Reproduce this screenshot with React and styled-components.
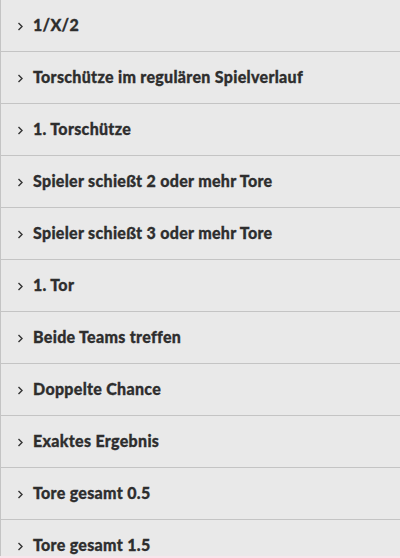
import styled, { createGlobalStyle } from 'styled-components';

const Global = createGlobalStyle`
body {
  margin: 0;
  background: #f7e6ec;
  font-family: Lato, "Noto Sans", sans-serif;
}
`;

const List = styled.div`
background: #e9e9e9;
border-left: 1px solid #c4c4c4;
height: 556px;
overflow: hidden;
`;

const Row = styled.div`
height: 52px;
border-bottom: 1px solid #c4c4c4;
display: flex;
align-items: center;
padding-left: 16px;
padding-bottom: 2px;
box-sizing: border-box;
gap: 9px;
`;

const Chevron = styled.svg`
width: 7px;
height: 9px;
flex-shrink: 0;
margin-top: 3px;
`;

const Label = styled.span`
font-size: 16px;
font-weight: 900;
letter-spacing: 0.3px;
color: #2e2e2e;
-webkit-text-stroke: 0.3px #2e2e2e;
`;

const items = [
  '1/X/2',
  'Torschütze im regulären Spielverlauf',
  '1. Torschütze',
  'Spieler schießt 2 oder mehr Tore',
  'Spieler schießt 3 oder mehr Tore',
  '1. Tor',
  'Beide Teams treffen',
  'Doppelte Chance',
  'Exaktes Ergebnis',
  'Tore gesamt 0.5',
  'Tore gesamt 1.5',
];

const App = () => {
  return (
    <>
      <Global />
      <List>
        {items.map((t) => (
          <Row key={t}>
            <Chevron viewBox="0 0 7 9">
              <path d="M1.5 1 L5 4.5 L1.5 8" fill="none" stroke="#333" strokeWidth="1.4" />
            </Chevron>
            <Label>{t}</Label>
          </Row>
        ))}
      </List>
    </>
  );
};

export default App;
